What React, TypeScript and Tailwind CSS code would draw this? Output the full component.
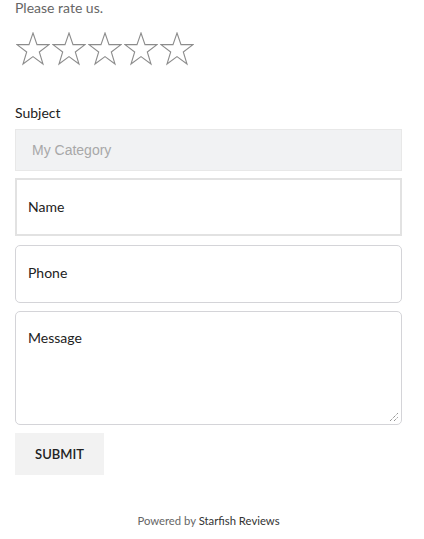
import React from 'react';

function Star() {
  return (
    <svg width="34" height="34" viewBox="0 0 34 34" className="shrink-0">
      <polygon
        points="17,1 21,12.6 33,12.6 23.3,20 27,32 17,24.6 7,32 10.7,20 1,12.6 13,12.6"
        fill="none"
        stroke="#8c8c8c"
        strokeWidth="1.1"
        strokeLinejoin="miter"
      />
    </svg>
  );
}

export default function App() {
  return (
    <div className="w-[424px] min-h-[539px] bg-white px-[15px] font-['Lato','Open_Sans',sans-serif] text-[14px] text-[#333]">
      {/* Rating */}
      <p className="mt-[-2px] leading-[20px] text-[#666]">Please rate us.</p>
      <div className="mt-[14px] flex gap-[2px] pl-px">
        {[0, 1, 2, 3, 4].map((i) => (
          <Star key={i} />
        ))}
      </div>

      {/* Form */}
      <form className="mt-[37px] w-[387px]" onSubmit={(e) => e.preventDefault()}>
        <label className="block leading-[20px] text-[#222]">Subject</label>
        <div className="mt-[6px] flex h-[42px] items-center border border-[#e8e8e8] bg-[#f1f2f3] px-[16px] font-['Liberation_Sans',Arial,sans-serif] text-[14px] text-[#a8a8a8]">
          My Category
        </div>

        <div className="mt-[7px] flex h-[58px] items-center border-2 border-[#e2e2e2] px-[11px] pb-[2px] text-[#222]">
          Name
        </div>

        <div className="mt-[9px] flex h-[58px] items-center rounded-[5px] border border-[#d4d4d8] px-[12px] pb-[4px] text-[#222]">
          Phone
        </div>

        <div className="relative mt-[8px] h-[114px] rounded-[5px] border border-[#d4d4d8] px-[12px] pt-[15px] text-[#222]">
          Message
          <svg width="10" height="10" viewBox="0 0 10 10" className="absolute bottom-[2px] right-[2px]">
            <line x1="1" y1="9" x2="9" y2="1" stroke="#666" strokeWidth="1" strokeDasharray="1 1" />
            <line x1="5" y1="9" x2="9" y2="5" stroke="#666" strokeWidth="1" strokeDasharray="1 1" />
          </svg>
        </div>

        <button
          type="submit"
          className="mt-[8px] flex h-[42px] w-[89px] items-center justify-center bg-[#f2f2f2] pt-[2px] text-[13px] font-semibold text-[#222]"
        >
          SUBMIT
        </button>

        {/* Footer */}
        <p className="mt-[38px] text-center text-[11.3px] leading-[16px] text-[#666]">
          Powered by <span className="text-[#333]">Starfish Reviews</span>
        </p>
      </form>
    </div>
  );
}
